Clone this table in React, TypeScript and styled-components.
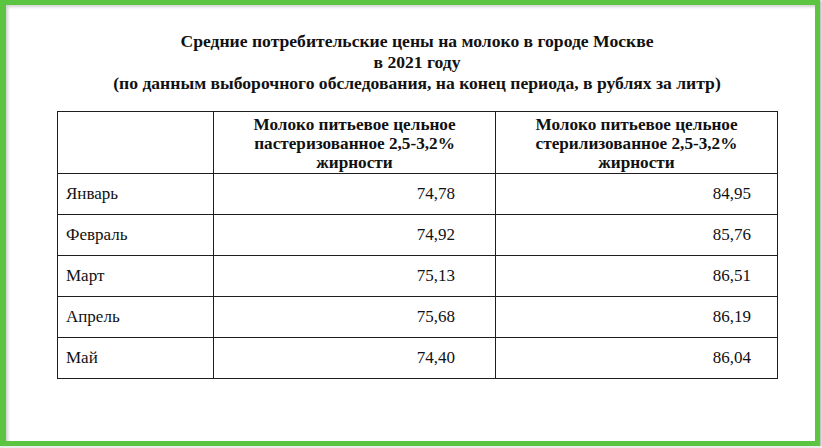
import React from 'react';
import styled, { createGlobalStyle } from 'styled-components';

const serif = `"Liberation Serif", "Times New Roman", serif`;

const GlobalStyle = createGlobalStyle`
  html, body {
    margin: 0;
    padding: 0;
    background: #ececec;
  }
`;

const Frame = styled.div`
  box-sizing: border-box;
  width: 820px;
  height: 446px;
  background: #fff;
  border: 5px solid #5bc541;
  border-left-width: 6px;
  box-shadow: inset 2px 2px 3px rgba(0, 0, 0, 0.18), 1px 1px 2px rgba(0, 0, 0, 0.25);
  padding: 26px 0 0 51px;
  color: #111;
`;

const Content = styled.div`
  width: 720px;
`;

const Title = styled.h1`
  margin: 0 0 17px;
  font-family: ${serif};
  font-size: 17.6px;
  line-height: 21px;
  font-weight: bold;
  text-align: center;
`;

const Table = styled.table`
  width: 720px;
  border-collapse: collapse;
  table-layout: fixed;
`;

const HeadCell = styled.th`
  height: 62px;
  box-sizing: border-box;
  border: 1px solid #1e1e1e;
  padding: 3px 6px 0;
  font-family: ${serif};
  font-size: 17.2px;
  line-height: 19px;
  font-weight: bold;
  text-align: center;
  vertical-align: top;
`;

const MonthCell = styled.td`
  height: 40px;
  border: 1px solid #1e1e1e;
  padding: 0 8px;
  font-family: ${serif};
  font-size: 17px;
  vertical-align: middle;
`;

const ValueCell = styled.td<{ $pad: number }>`
  height: 40px;
  border: 1px solid #1e1e1e;
  padding: 0 ${(p) => p.$pad}px 0 8px;
  font-family: ${serif};
  font-size: 17px;
  text-align: right;
  vertical-align: middle;
`;

const rows = [
  { month: 'Январь', past: '74,78', ster: '84,95' },
  { month: 'Февраль', past: '74,92', ster: '85,76' },
  { month: 'Март', past: '75,13', ster: '86,51' },
  { month: 'Апрель', past: '75,68', ster: '86,19' },
  { month: 'Май', past: '74,40', ster: '86,04' },
];

const App: React.FC = () => {
  return (
    <>
      <GlobalStyle />
      <Frame>
        <Content>
          <Title>
            Средние потребительские цены на молоко в городе Москве
            <br />
            в 2021 году
            <br />
            (по данным выборочного обследования, на конец периода, в рублях за литр)
          </Title>
          <Table>
            <colgroup>
              <col style={{ width: 156 }} />
              <col style={{ width: 282 }} />
              <col style={{ width: 282 }} />
            </colgroup>
            <thead>
              <tr>
                <HeadCell />
                <HeadCell>
                  Молоко питьевое цельное
                  <br />
                  пастеризованное 2,5-3,2%
                  <br />
                  жирности
                </HeadCell>
                <HeadCell>
                  Молоко питьевое цельное
                  <br />
                  стерилизованное 2,5-3,2%
                  <br />
                  жирности
                </HeadCell>
              </tr>
            </thead>
            <tbody>
              {rows.map((r) => (
                <tr key={r.month}>
                  <MonthCell>{r.month}</MonthCell>
                  <ValueCell $pad={40}>{r.past}</ValueCell>
                  <ValueCell $pad={26}>{r.ster}</ValueCell>
                </tr>
              ))}
            </tbody>
          </Table>
        </Content>
      </Frame>
    </>
  );
};

export default App;
